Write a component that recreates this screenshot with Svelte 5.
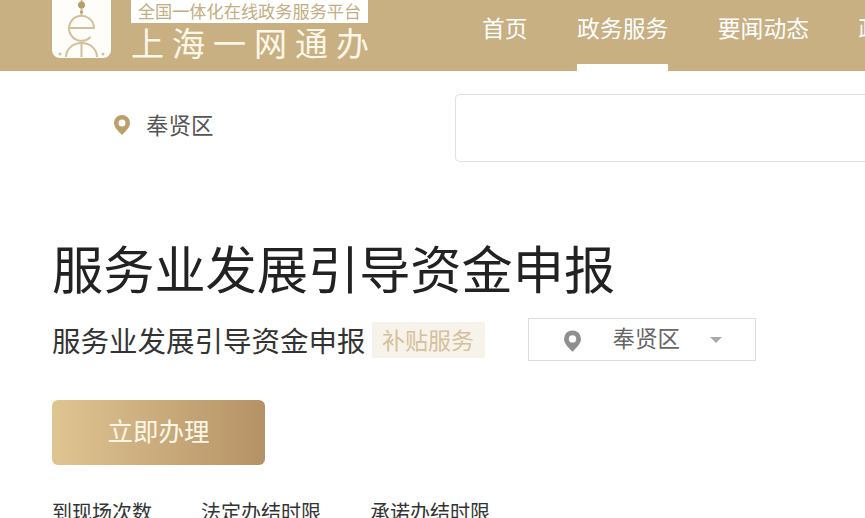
<script>
  const navItems = ['首页', '政务服务', '要闻动态', '政民互动'];
  const stats = ['到现场次数', '法定办结时限', '承诺办结时限'];
</script>

<div class="page">
  <header class="header">
    <div class="logo">
      <svg width="59" height="58" viewBox="0 0 59 58">
        <path d="M0 0H59V50a8 8 0 0 1-8 8H8a8 8 0 0 1-8-8Z" fill="#fffdf9" />
        <g fill="none" stroke="#d3bf9b" stroke-width="2">
          <path d="M29.500 0V15" />
          <path d="M17.500 28H42A12.500 12.500 0 1 0 38.500 37" />
          <path d="M14 57C14 50 20 43 29.500 43C39 43 45 50 45 57" />
          <path d="M29.500 43V57" />
        </g>
        <circle cx="29.500" cy="5" r="3.500" fill="#b99c68" />
        <circle cx="29.500" cy="12" r="1.500" fill="#b99c68" />
        <circle cx="8" cy="54" r="1.500" fill="#d3bf9b" />
        <circle cx="51" cy="54" r="1.500" fill="#d3bf9b" />
      </svg>
    </div>
    <div class="brand">
      <div class="slogan">全国一体化在线政务服务平台</div>
      <div class="brand-name">上海一网通办</div>
    </div>
    <nav class="nav">
      {#each navItems as item, i}
        <span class="nav-item" class:active={i === 1}>{item}</span>
      {/each}
    </nav>
  </header>

  <div class="search-row">
    <div class="location">
      <svg width="16" height="20" viewBox="0 0 16 20">
        <path d="M8 0a8 8 0 0 1 8 8c0 4.500-5 9-8 12C5 17 0 12.500 0 8a8 8 0 0 1 8-8Z" fill="#bd9f6c" />
        <circle cx="8" cy="8" r="3.500" fill="#fff" />
      </svg>
      <span class="location-name">奉贤区</span>
    </div>
    <div class="search-box"></div>
  </div>

  <main class="content">
    <h1>服务业发展引导资金申报</h1>
    <div class="sub-row">
      <span class="sub-title">服务业发展引导资金申报</span>
      <span class="tag">补贴服务</span>
      <div class="area-select">
        <svg width="17" height="22" viewBox="0 0 16 20">
          <path d="M8 0a8 8 0 0 1 8 8c0 4.500-5 9-8 12C5 17 0 12.500 0 8a8 8 0 0 1 8-8Z" fill="#8f8f8f" />
          <circle cx="8" cy="8" r="3.500" fill="#fff" />
        </svg>
        <span class="area-name">奉贤区</span>
        <span class="caret"></span>
      </div>
    </div>
    <button class="apply">立即办理</button>
    <div class="stats">
      {#each stats as label}
        <span>{label}</span>
      {/each}
    </div>
  </main>
</div>

<style>
  :global(body) {
    margin: 0;
    background: #fff;
  }

  .page {
    width: 865px;
    height: 518px;
    overflow: hidden;
    font-family: "Noto Sans CJK SC", "Noto Sans", sans-serif;
    color: #333;
  }

  .header {
    height: 71px;
    background: #c8b083;
    display: flex;
    padding-left: 52px;
    overflow: hidden;
  }

  .logo {
    width: 59px;
    height: 58px;
    margin-right: 20px;
  }

  .logo svg {
    display: block;
  }

  .brand {
    width: 237px;
  }

  .slogan {
    height: 23px;
    background: #fff;
    color: #c4ad82;
    font-size: 17.200px;
    line-height: 21px;
    text-align: center;
    white-space: nowrap;
  }

  .brand-name {
    color: #fff7e8;
    font-size: 33px;
    line-height: 38px;
    letter-spacing: 8px;
    white-space: nowrap;
  }

  .nav {
    display: flex;
    gap: 49.500px;
    margin-left: 114px;
    white-space: nowrap;
  }

  .nav-item {
    position: relative;
    color: #fff;
    font-size: 22.800px;
    line-height: 56px;
    height: 71px;
  }

  .nav-item.active::after {
    content: '';
    position: absolute;
    left: 0;
    right: 0;
    bottom: 0;
    height: 7px;
    background: #fff;
  }

  .search-row {
    display: flex;
    height: 68px;
    margin-top: 23px;
    padding-left: 114px;
  }

  .location {
    width: 341px;
    height: 60px;
    display: flex;
    align-items: center;
    gap: 16px;
    font-size: 22.500px;
    color: #555;
  }

  .location svg {
    margin-top: 2px;
  }

  .search-box {
    flex: 1;
    height: 66px;
    border: 1px solid #e3e0da;
    border-right: 0;
    border-radius: 5px 0 0 5px;
  }

  .content {
    padding: 67px 0 0 52px;
  }

  h1 {
    margin: 0;
    font-size: 51.200px;
    line-height: 76px;
    font-weight: 400;
    color: #222;
    white-space: nowrap;
  }

  .sub-row {
    display: flex;
    align-items: center;
    margin-top: 13px;
  }

  .sub-title {
    font-size: 28.500px;
    line-height: 42px;
    color: #333;
    white-space: nowrap;
  }

  .tag {
    margin-left: 6px;
    width: 113px;
    height: 36px;
    background: #f7f3ea;
    color: #d4c19c;
    font-size: 23px;
    line-height: 34px;
    text-align: center;
    border-radius: 2px;
  }

  .area-select {
    margin-left: 43px;
    width: 228px;
    height: 43px;
    border: 1px solid #dcdcdc;
    display: flex;
    align-items: center;
    padding: 0 0 0 35px;
    box-sizing: border-box;
  }

  .area-select svg {
    margin-top: 2px;
  }

  .area-name {
    margin-left: 32px;
    font-size: 22.500px;
    line-height: 36px;
    margin-bottom: 5px;
    color: #666;
  }

  .caret {
    margin-left: 30px;
    border: 6px solid transparent;
    border-top: 6px solid #aaa;
    border-bottom: 0;
  }

  .apply {
    display: block;
    margin-top: 39px;
    width: 213px;
    height: 65px;
    border: 0;
    border-radius: 6px;
    background: linear-gradient(90deg, #dfc592, #b59266);
    color: #fff7e8;
    font-family: inherit;
    font-size: 25.500px;
    line-height: 60px;
    padding: 0 0 5px;
  }

  .stats {
    display: flex;
    gap: 49px;
    margin-top: 32px;
    font-size: 20px;
    line-height: 30px;
    color: #333;
    white-space: nowrap;
  }
</style>
